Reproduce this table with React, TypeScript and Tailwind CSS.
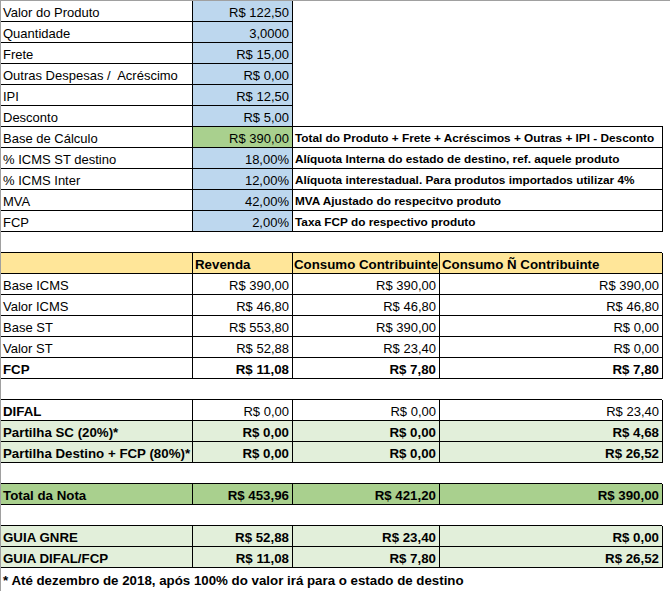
import React from "react";

type RowKind = "white" | "light" | "green" | "yellow";

const bgOf: Record<RowKind, string> = {
  white: "bg-white",
  light: "bg-[#E2EFDA]",
  green: "bg-[#A9D08E]",
  yellow: "bg-[#FFE699]",
};

function Cell({
  className,
  children,
}: {
  className: string;
  children?: React.ReactNode;
}) {
  return (
    <div
      className={
        "h-full flex items-end leading-[16px] whitespace-pre overflow-hidden shrink-0 " +
        className
      }
    >
      {children}
    </div>
  );
}

const topRows: { label: string; value: string; desc?: string; green?: boolean; boxTop?: boolean }[] = [
  { label: "Valor do Produto", value: "R$ 122,50" },
  { label: "Quantidade", value: "3,0000" },
  { label: "Frete", value: "R$ 15,00" },
  { label: "Outras Despesas /  Acréscimo", value: "R$ 0,00" },
  { label: "IPI", value: "R$ 12,50" },
  { label: "Desconto", value: "R$ 5,00", boxTop: true },
  {
    label: "Base de Cálculo",
    value: "R$ 390,00",
    green: true,
    desc: "Total do Produto + Frete + Acréscimos + Outras + IPI - Desconto",
  },
  {
    label: "% ICMS ST destino",
    value: "18,00%",
    desc: "Alíquota Interna do estado de destino, ref. aquele produto",
  },
  {
    label: "% ICMS Inter",
    value: "12,00%",
    desc: "Alíquota interestadual. Para produtos importados utilizar 4%",
  },
  { label: "MVA", value: "42,00%", desc: "MVA Ajustado do respecitvo produto" },
  { label: "FCP", value: "2,00%", desc: "Taxa FCP do respectivo produto" },
];

type BRow =
  | { empty: true }
  | {
      empty?: false;
      label: string;
      vals: [string, string, string];
      kind: RowKind;
      boldLabel?: boolean;
      boldVals?: boolean;
    };

const bottomRows: BRow[] = [
  { label: "Base ICMS", vals: ["R$ 390,00", "R$ 390,00", "R$ 390,00"], kind: "white" },
  { label: "Valor ICMS", vals: ["R$ 46,80", "R$ 46,80", "R$ 46,80"], kind: "white" },
  { label: "Base ST", vals: ["R$ 553,80", "R$ 390,00", "R$ 0,00"], kind: "white" },
  { label: "Valor ST", vals: ["R$ 52,88", "R$ 23,40", "R$ 0,00"], kind: "white" },
  { label: "FCP", vals: ["R$ 11,08", "R$ 7,80", "R$ 7,80"], kind: "white", boldLabel: true, boldVals: true },
  { empty: true },
  { label: "DIFAL", vals: ["R$ 0,00", "R$ 0,00", "R$ 23,40"], kind: "white", boldLabel: true },
  { label: "Partilha SC (20%)*", vals: ["R$ 0,00", "R$ 0,00", "R$ 4,68"], kind: "light", boldLabel: true, boldVals: true },
  {
    label: "Partilha Destino + FCP (80%)*",
    vals: ["R$ 0,00", "R$ 0,00", "R$ 26,52"],
    kind: "light",
    boldLabel: true,
    boldVals: true,
  },
  { empty: true },
  { label: "Total da Nota", vals: ["R$ 453,96", "R$ 421,20", "R$ 390,00"], kind: "green", boldLabel: true, boldVals: true },
  { empty: true },
  { label: "GUIA GNRE", vals: ["R$ 52,88", "R$ 23,40", "R$ 0,00"], kind: "light", boldLabel: true, boldVals: true },
  { label: "GUIA DIFAL/FCP", vals: ["R$ 11,08", "R$ 7,80", "R$ 26,52"], kind: "light", boldLabel: true, boldVals: true },
];

const REG = "text-[13px] font-normal";
const BOLD = "text-[13.3px] font-bold";
const DESC = "text-[11.8px] font-bold";

export default function App() {
  return (
    <div className="w-[670px] h-[591px] bg-white overflow-hidden border-t border-l border-[#a0a0a0] text-black font-['Liberation_Sans',Arial,sans-serif]">
      {topRows.map((r, i) => (
        <div key={i} className="flex h-[21px]">
          <Cell className={"w-[192px] pl-[2px] border-b border-r border-black " + REG}>{r.label}</Cell>
          <Cell
            className={
              "w-[100px] justify-end pr-[3px] border-b border-r border-black " +
              (r.green ? "bg-[#A9D08E] " : "bg-[#BDD7EE] ") +
              REG
            }
          >
            {r.value}
          </Cell>
          {r.desc ? (
            <Cell className={"w-[370px] pl-[2px] pb-[1px] border-b border-r border-black " + DESC}>{r.desc}</Cell>
          ) : r.boxTop ? (
            <Cell className="w-[370px] border-b border-black" />
          ) : (
            <Cell className="w-[370px]" />
          )}
        </div>
      ))}

      <div className="h-[21px] w-[661px] border-b border-black" />

      <div className="flex h-[21px]">
        <Cell className={"w-[192px] border-b border-r border-black bg-[#FFE699] " + BOLD} />
        <Cell className={"w-[100px] pl-[2px] border-b border-r border-black bg-[#FFE699] " + BOLD}>Revenda</Cell>
        <Cell className={"w-[147px] pl-[1px] border-b border-r border-black bg-[#FFE699] " + BOLD}>
          Consumo Contribuinte
        </Cell>
        <Cell className={"w-[223px] pl-[2px] border-b border-r border-black bg-[#FFE699] " + BOLD}>
          Consumo Ñ Contribuinte
        </Cell>
      </div>

      {bottomRows.map((r, i) =>
        r.empty ? (
          <div key={i} className="h-[21px] w-[661px] border-b border-black" />
        ) : (
          <div key={i} className="flex h-[21px]">
            <Cell
              className={
                "w-[192px] pl-[2px] border-b border-r border-black " +
                bgOf[r.kind] +
                " " +
                (r.boldLabel ? BOLD : REG)
              }
            >
              {r.label}
            </Cell>
            <Cell
              className={
                "w-[100px] justify-end pr-[3px] border-b border-r border-black " +
                bgOf[r.kind] +
                " " +
                (r.boldVals ? BOLD : REG)
              }
            >
              {r.vals[0]}
            </Cell>
            <Cell
              className={
                "w-[147px] justify-end pr-[3px] border-b border-r border-black " +
                bgOf[r.kind] +
                " " +
                (r.boldVals ? BOLD : REG)
              }
            >
              {r.vals[1]}
            </Cell>
            <Cell
              className={
                "w-[223px] justify-end pr-[3px] border-b border-r border-black " +
                bgOf[r.kind] +
                " " +
                (r.boldVals ? BOLD : REG)
              }
            >
              {r.vals[2]}
            </Cell>
          </div>
        )
      )}

      <div className="flex h-[21px]">
        <Cell className={"w-[661px] pl-[2px] " + BOLD}>
          * Até dezembro de 2018, após 100% do valor irá para o estado de destino
        </Cell>
      </div>
    </div>
  );
}
